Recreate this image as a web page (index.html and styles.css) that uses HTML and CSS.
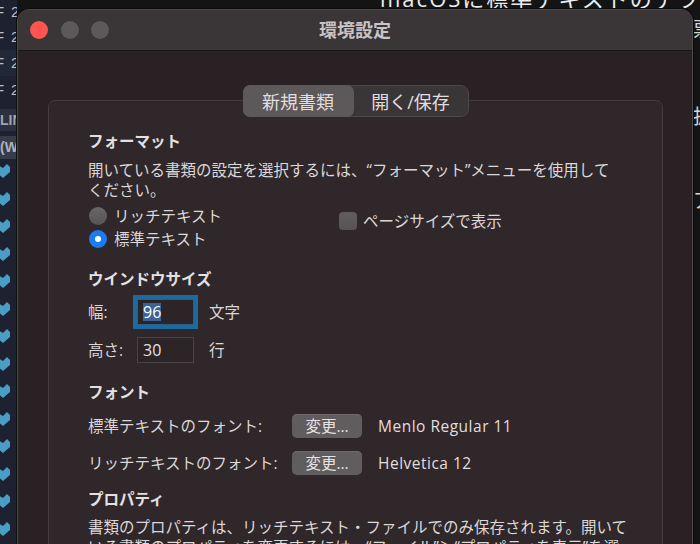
FILE: index.html
```html
<!DOCTYPE html>
<html lang="ja">
<head>
<meta charset="utf-8">
<title>環境設定</title>
<link rel="stylesheet" href="styles.css">
</head>
<body>
<div class="desktop">
  <div class="bg-left">
    <div class="bl-row h24"><span class="f">F</span><span>2024</span></div>
    <div class="bl-row h27"><span class="f">F</span><span>2024</span></div>
    <div class="bl-row h27 lite"><span class="f">F</span><span>2024</span></div>
    <div class="bl-row h28"><span class="f">F</span><span>2024</span></div>
    <div class="bl-band lin">LINE</div>
    <div class="bl-band w">(W</div>
    <div class="bl-icons">
      <svg class="bl-icon" viewBox="0 0 10 14"><path d="M-2 1 L3 4 L7 0 L10 3 L10 8 L3 14 L-2 10 Z"/></svg>
      <svg class="bl-icon" viewBox="0 0 10 14"><path d="M-2 1 L3 4 L7 0 L10 3 L10 8 L3 14 L-2 10 Z"/></svg>
      <svg class="bl-icon" viewBox="0 0 10 14"><path d="M-2 1 L3 4 L7 0 L10 3 L10 8 L3 14 L-2 10 Z"/></svg>
      <svg class="bl-icon" viewBox="0 0 10 14"><path d="M-2 1 L3 4 L7 0 L10 3 L10 8 L3 14 L-2 10 Z"/></svg>
      <svg class="bl-icon" viewBox="0 0 10 14"><path d="M-2 1 L3 4 L7 0 L10 3 L10 8 L3 14 L-2 10 Z"/></svg>
      <svg class="bl-icon" viewBox="0 0 10 14"><path d="M-2 1 L3 4 L7 0 L10 3 L10 8 L3 14 L-2 10 Z"/></svg>
      <svg class="bl-icon" viewBox="0 0 10 14"><path d="M-2 1 L3 4 L7 0 L10 3 L10 8 L3 14 L-2 10 Z"/></svg>
      <svg class="bl-icon" viewBox="0 0 10 14"><path d="M-2 1 L3 4 L7 0 L10 3 L10 8 L3 14 L-2 10 Z"/></svg>
      <svg class="bl-icon" viewBox="0 0 10 14"><path d="M-2 1 L3 4 L7 0 L10 3 L10 8 L3 14 L-2 10 Z"/></svg>
      <svg class="bl-icon" viewBox="0 0 10 14"><path d="M-2 1 L3 4 L7 0 L10 3 L10 8 L3 14 L-2 10 Z"/></svg>
      <svg class="bl-icon" viewBox="0 0 10 14"><path d="M-2 1 L3 4 L7 0 L10 3 L10 8 L3 14 L-2 10 Z"/></svg>
      <svg class="bl-icon" viewBox="0 0 10 14"><path d="M-2 1 L3 4 L7 0 L10 3 L10 8 L3 14 L-2 10 Z"/></svg>
      <svg class="bl-icon" viewBox="0 0 10 14"><path d="M-2 1 L3 4 L7 0 L10 3 L10 8 L3 14 L-2 10 Z"/></svg>
      <svg class="bl-icon" viewBox="0 0 10 14"><path d="M-2 1 L3 4 L7 0 L10 3 L10 8 L3 14 L-2 10 Z"/></svg>
    </div>
  </div>

  <div class="bg-top">macOSに標準テキストのデフォルト</div>

  <div class="bg-right">
    <span class="br-ch c1">票</span>
    <span class="br-ch c2">拡</span>
    <span class="br-ch c3">ア</span>
  </div>

  <div class="window">
    <div class="titlebar">
      <div class="lights">
        <span class="light close"></span>
        <span class="light"></span>
        <span class="light"></span>
      </div>
      <div class="title">環境設定</div>
      <div></div>
    </div>

    <div class="content">
      <div class="tabs-wrap">
        <div class="tabs">
          <div class="tab tab-new active">新規書類</div>
          <div class="tab tab-open">開く/保存</div>
        </div>
      </div>

      <div class="panel">
        <h3 class="heading">フォーマット</h3>
        <p class="desc">開いている書類の設定を選択するには、“フォーマット”メニューを使用して<br>ください。</p>
        <div class="options">
          <div class="radios">
            <div class="radio-row"><span class="radio"></span><span>リッチテキスト</span></div>
            <div class="radio-row"><span class="radio on"></span><span>標準テキスト</span></div>
          </div>
          <div class="check-row"><span class="checkbox"></span><span>ページサイズで表示</span></div>
        </div>

        <h3 class="heading sec">ウインドウサイズ</h3>
        <div class="size-grid">
          <span class="size-label">幅:</span>
          <span class="field focused"><span class="sel">96</span></span>
          <span class="unit">文字</span>
          <span class="size-label">高さ:</span>
          <span class="field">30</span>
          <span class="unit">行</span>
        </div>

        <h3 class="heading sec">フォント</h3>
        <div class="font-grid">
          <span class="font-label">標準テキストのフォント:</span>
          <span class="btn">変更...</span>
          <span class="font-name">Menlo Regular 11</span>
          <span class="font-label">リッチテキストのフォント:</span>
          <span class="btn">変更...</span>
          <span class="font-name">Helvetica 12</span>
        </div>

        <h3 class="heading sec-prop">プロパティ</h3>
        <p class="desc desc-prop">書類のプロパティは、リッチテキスト・ファイルでのみ保存されます。開いて<br>いる書類のプロパティを変更するには、“ファイル”＞“プロパティを表示”を選</p>
      </div>
    </div>
  </div>
</div>
</body>
</html>
```

FILE: styles.css
```css
* {
  box-sizing: border-box;
  margin: 0;
  padding: 0;
}

html,
body {
  width: 700px;
  height: 544px;
  overflow: hidden;
}

body {
  background: #141414;
  font-family: "Open Sans", "Noto Sans CJK JP", sans-serif;
  color: #dcd7d8;
}

.desktop {
  position: relative;
  width: 700px;
  height: 544px;
  overflow: hidden;
}

/* ---------- background windows ---------- */
.bg-left {
  position: absolute;
  left: 0;
  top: 0;
  width: 17px;
  height: 544px;
  overflow: hidden;
  background: #1d2130;
  display: flex;
  flex-direction: column;
  font-family: "Liberation Sans", sans-serif;
  font-size: 15px;
  color: #b9bdc7;
}

.bl-row {
  display: flex;
  align-items: center;
  white-space: nowrap;
}

.bl-row .f {
  display: inline-block;
  width: 16px;
  margin-left: -5px;
  flex: none;
}

.h24 { height: 24px; }
.h27 { height: 27px; }
.h28 { height: 28px; }
.lite { background: #232838; }

.bl-band {
  white-space: nowrap;
  font-weight: 700;
  font-size: 14px;
  display: flex;
  align-items: center;
}

.bl-band.lin {
  margin-top: 6px;
  height: 22px;
  background: #2c3141;
  color: #9ea4b2;
}

.bl-band.w {
  margin-top: 5px;
  height: 24px;
  background: #373c4b;
  color: #aeb3bf;
}

.bl-icons {
  display: flex;
  flex-direction: column;
}

.bl-icon {
  display: block;
  flex: none;
  width: 10px;
  height: 14px;
  margin-top: 5px;
  margin-bottom: 8.5px;
  fill: #4a9dc4;
}

.bg-top {
  position: absolute;
  left: 380px;
  top: -13px;
  font-size: 22px;
  line-height: 22px;
  color: #ececec;
  white-space: nowrap;
  letter-spacing: 2px;
}

.bg-right {
  position: absolute;
  left: 693px;
  top: 0;
  width: 7px;
  height: 544px;
  overflow: hidden;
  display: flex;
  flex-direction: column;
  font-size: 20px;
  line-height: 20px;
  color: #d6d6d6;
}

.br-ch { display: block; }
.c1 { margin-top: 20px; }
.c2 { margin-top: 67px; }
.c3 { margin-top: 64px; }

/* ---------- preferences window ---------- */
.window {
  position: absolute;
  left: 17px;
  top: 9px;
  width: 676px;
  height: 560px;
  background: #2a2124;
  border: 1px solid #4f494a;
  border-radius: 12px 12px 0 0;
  overflow: hidden;
  box-shadow: 0 0 0 1px #0c0c0c;
}

.titlebar {
  height: 41px;
  background: #3a3536;
  border-bottom: 1px solid #1a1617;
  display: grid;
  grid-template-columns: 1fr auto 1fr;
  align-items: center;
}

.lights {
  display: flex;
  gap: 12.5px;
  padding-left: 12px;
}

.light {
  width: 18px;
  height: 18px;
  border-radius: 50%;
  background: #5d5859;
}

.light.close {
  background: #fe5550;
}

.title {
  font-size: 18px;
  font-weight: 700;
  line-height: 20px;
  color: #c8c3c4;
}

.content {
  padding-top: 34px;
}

.tabs-wrap {
  position: relative;
  z-index: 1;
  display: flex;
  justify-content: center;
  padding-left: 1px;
}

.tabs {
  display: flex;
  height: 32px;
  background: #3a3537;
  border: 1px solid #4d4749;
  border-radius: 8px;
}

.tab {
  display: flex;
  align-items: center;
  justify-content: center;
  font-size: 18px;
  color: #e2dedf;
  border-radius: 7px;
}

.tab-new {
  width: 111px;
  margin: -1px 0 -1px -1px;
}

.tab-open {
  width: 114px;
}

.tab.active {
  background: #5d5859;
}

.panel {
  margin: -17px 29px 0 30px;
  height: 480px;
  background: #2f272a;
  border: 1px solid #433b3e;
  border-radius: 7px;
  padding: 30px 20px 0 39px;
  font-size: 15.5px;
  line-height: 20px;
}

.heading {
  font-size: 15.5px;
  line-height: 20px;
  font-weight: 700;
  color: #e4e0e1;
}

.heading.sec {
  margin-top: 19px;
}

.heading.sec-prop {
  margin-top: 14px;
}

.desc {
  margin-top: 9px;
  white-space: nowrap;
}

.desc-prop {
  margin-top: 8px;
}

/* options */
.options {
  margin-top: 4px;
  display: grid;
  grid-template-columns: 251px auto;
  align-items: start;
}

.radio-row {
  height: 23px;
  display: flex;
  align-items: center;
  gap: 7px;
}

.radio {
  width: 18px;
  height: 18px;
  margin-left: 1px;
  border-radius: 50%;
  background: linear-gradient(#6a6566, #575253);
  display: flex;
  align-items: center;
  justify-content: center;
}

.radio.on {
  background: #1a7cf2;
}

.radio.on::after {
  content: "";
  width: 6px;
  height: 6px;
  border-radius: 50%;
  background: #ffffff;
}

.check-row {
  margin-top: 8px;
  display: flex;
  align-items: center;
  gap: 6px;
  height: 18px;
}

.checkbox {
  width: 18px;
  height: 18px;
  border-radius: 4px;
  background: linear-gradient(#625d5e, #575253);
}

/* window size */
.size-grid {
  margin-top: 10px;
  display: grid;
  grid-template-columns: 49px 57px auto;
  grid-auto-rows: 26px;
  row-gap: 12px;
  align-items: center;
}

.field {
  height: 26px;
  border: 1px solid #4a4345;
  background: #2c2427;
  padding-left: 5px;
  display: flex;
  align-items: center;
  color: #e4e0e1;
  font-size: 16px;
}

.field.focused {
  border-color: #2f5f86;
  box-shadow: 0 0 0 4px #1d6aa0;
}

.sel {
  background: #3d6394;
  color: #ffffff;
  line-height: 18px;
}

.unit {
  margin-left: 15px;
}

/* fonts */
.font-grid {
  margin-top: 12px;
  display: grid;
  grid-template-columns: 204px 70px auto;
  grid-auto-rows: 24px;
  row-gap: 13px;
  align-items: center;
}

.btn {
  height: 24px;
  border-radius: 5px;
  background: #615c5d;
  box-shadow: inset 0 1px 0 #6e696a;
  display: flex;
  align-items: center;
  justify-content: center;
  color: #e6e2e3;
}

.font-name {
  margin-left: 16px;
  color: #e2dedf;
  letter-spacing: 0.5px;
}
```
